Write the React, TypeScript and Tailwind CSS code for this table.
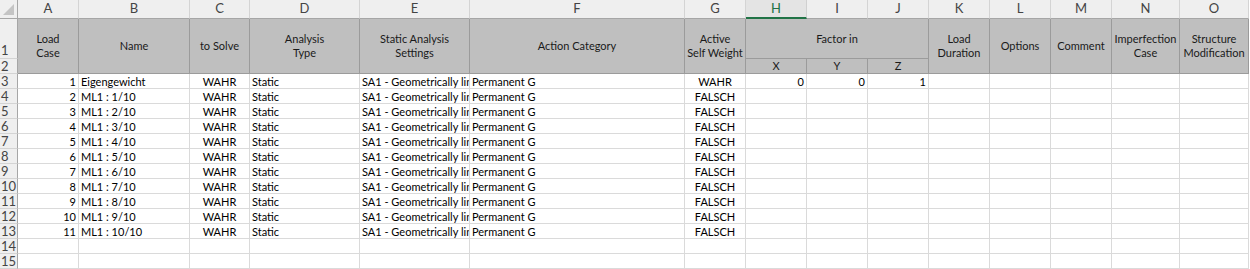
import React from "react";

type Row = {
  n: number;
  name: string;
  solve: string;
  type: string;
  settings: string;
  category: string;
  selfWeight: string;
  x: string;
  y: string;
  z: string;
};

const rows: Row[] = [
  { n: 1, name: "Eigengewicht", solve: "WAHR", type: "Static", settings: "SA1 - Geometrically linear", category: "Permanent G", selfWeight: "WAHR", x: "0", y: "0", z: "1" },
  ...Array.from({ length: 10 }, (_, i) => ({
    n: i + 2,
    name: `ML1 : ${i + 1}/10`,
    solve: "WAHR",
    type: "Static",
    settings: "SA1 - Geometrically linear",
    category: "Permanent G",
    selfWeight: "FALSCH",
    x: "",
    y: "",
    z: "",
  })),
];

const letters = ["A", "B", "C", "D", "E", "F", "G", "H", "I", "J", "K", "L", "M", "N", "O"];

const font = { fontFamily: "Lato, 'Open Sans', sans-serif" };

function ColHead({ l }: { l: string }) {
  const active = l === "H";
  return (
    <div
      className={
        "flex items-center justify-center border-b border-r text-[13px] " +
        (active
          ? "border-r-[#d0d0d0] border-b-2 border-b-[#217346] bg-[#e4e4e4] text-[#217346]"
          : "border-r-[#d4d4d4] border-b-[#a6a6a6] bg-[#efefef] text-[#444]")
      }
    >
      {l}
    </div>
  );
}

function RowHead({ n, tall = false }: { n: number; tall?: boolean }) {
  return (
    <div
      className={
        "flex border-b border-r border-b-[#d4d4d4] border-r-[#a6a6a6] bg-[#efefef] pl-[1px] text-[13px] leading-[15px] text-[#444] " +
        (tall ? "items-end pb-[0px]" : "items-center")
      }
    >
      {n}
    </div>
  );
}

function Head({ children, span = "row-span-2" }: { children: React.ReactNode; span?: string }) {
  return (
    <div
      className={
        span +
        " flex items-center justify-center border-b border-r border-b-[#9b9b9b] border-r-[#9b9b9b] bg-[#bfbfbf] px-[1px] text-center text-[11px] leading-[14px] text-[#1a1a1a]"
      }
    >
      <span>{children}</span>
    </div>
  );
}

function Cell({ v = "", align = "left" }: { v?: string | number; align?: "left" | "right" | "center" }) {
  const a =
    align === "right" ? "justify-end pr-[2px]" : align === "center" ? "justify-center" : "justify-start pl-[2px]";
  return (
    <div
      className={
        "flex items-center overflow-hidden whitespace-nowrap border-b border-r border-[#dadada] bg-white text-[11px] leading-[15px] text-black " +
        a
      }
    >
      {v}
    </div>
  );
}

export default function App() {
  return (
    <div className="h-[269px] w-[1250px] overflow-hidden bg-white" style={font}>
      <div className="grid grid-cols-[18px_61px_111px_60px_110px_110px_215px_61px_61px_61px_61px_61px_61px_61px_68px_69px] grid-rows-[19px_40px_15px_repeat(13,15px)]">
        {/* corner with select-all triangle */}
        <div className="flex items-end justify-end border-b border-r border-b-[#a6a6a6] border-r-[#a6a6a6] bg-[#efefef] pb-[3px] pr-[3px]">
          <svg width="11" height="11" viewBox="0 0 11 11">
            <polygon points="11,0 11,11 0,11" fill="#c4c4c4" />
          </svg>
        </div>
        {letters.map((l) => (
          <ColHead key={l} l={l} />
        ))}

        {/* header block, rows 1-2 */}
        <RowHead n={1} tall />
        <Head>
          Load
          <br />
          Case
        </Head>
        <Head>Name</Head>
        <Head>to Solve</Head>
        <Head>
          Analysis
          <br />
          Type
        </Head>
        <Head>
          Static Analysis
          <br />
          Settings
        </Head>
        <Head>Action Category</Head>
        <Head>
          Active
          <br />
          Self Weight
        </Head>
        <Head span="col-span-3">Factor in</Head>
        <Head>
          Load
          <br />
          Duration
        </Head>
        <Head>Options</Head>
        <Head>Comment</Head>
        <Head>
          Imperfection
          <br />
          Case
        </Head>
        <Head>
          Structure
          <br />
          Modification
        </Head>
        <RowHead n={2} />
        <Head span="">X</Head>
        <Head span="">Y</Head>
        <Head span="">Z</Head>

        {/* data rows */}
        {rows.map((r, i) => (
          <React.Fragment key={r.n}>
            <RowHead n={i + 3} />
            <Cell v={r.n} align="right" />
            <Cell v={r.name} />
            <Cell v={r.solve} align="center" />
            <Cell v={r.type} />
            <Cell v={r.settings} />
            <Cell v={r.category} />
            <Cell v={r.selfWeight} align="center" />
            <Cell v={r.x} align="right" />
            <Cell v={r.y} align="right" />
            <Cell v={r.z} align="right" />
            <Cell />
            <Cell />
            <Cell />
            <Cell />
            <Cell />
          </React.Fragment>
        ))}

        {/* empty rows 14-15 */}
        {[14, 15].map((n) => (
          <React.Fragment key={n}>
            <RowHead n={n} />
            {letters.map((l) => (
              <Cell key={l} />
            ))}
          </React.Fragment>
        ))}
      </div>
    </div>
  );
}
